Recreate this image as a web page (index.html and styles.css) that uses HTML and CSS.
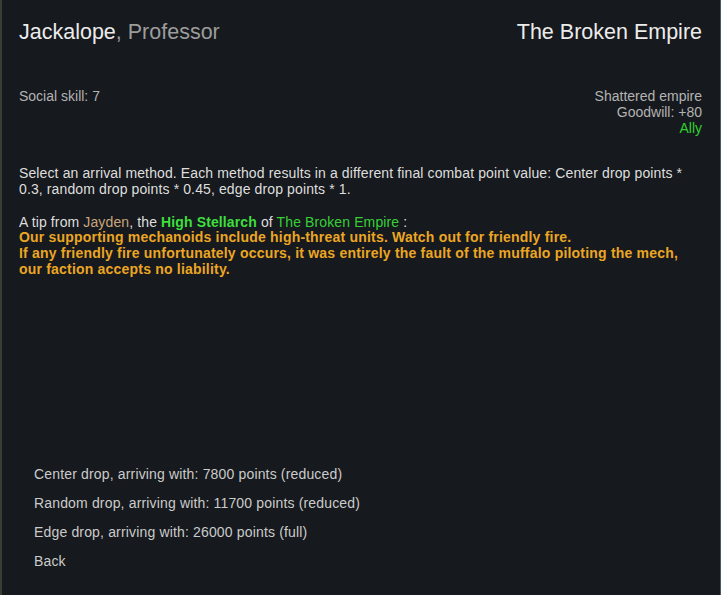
FILE: index.html
```html
<!DOCTYPE html>
<html>
<head>
<meta charset="utf-8">
<link rel="stylesheet" href="styles.css">
</head>
<body>
<div class="dialog">
  <div class="header">
    <div class="name">Jackalope<span class="title">, Professor</span></div>
    <div class="faction">The Broken Empire</div>
  </div>
  <div class="info">
    <div class="skill">Social skill: 7</div>
    <div class="standing">
      <div>Shattered empire</div>
      <div>Goodwill: +80</div>
      <div class="ally">Ally</div>
    </div>
  </div>
  <p class="desc">Select an arrival method. Each method results in a different final combat point value: Center drop points * 0.3, random drop points * 0.45, edge drop points * 1.</p>
  <div class="tip">
    <div class="tip-line">A tip from <span class="speaker">Jayden</span>, the <span class="rank">High Stellarch</span> of <span class="fac">The Broken Empire</span> :</div>
    <div class="warn">Our supporting mechanoids include high-threat units. Watch out for friendly fire.<br>If any friendly fire unfortunately occurs, it was entirely the fault of the muffalo piloting the mech, our faction accepts no liability.</div>
  </div>
  <div class="options">
    <div class="opt">Center drop, arriving with: 7800 points (reduced)</div>
    <div class="opt">Random drop, arriving with: 11700 points (reduced)</div>
    <div class="opt">Edge drop, arriving with: 26000 points (full)</div>
    <div class="opt">Back</div>
  </div>
</div>
</body>
</html>
```

FILE: styles.css
```css
html, body {
  margin: 0;
  padding: 0;
  height: 100%;
  background: #16191d;
}
body {
  font-family: "Liberation Sans", Arial, sans-serif;
  font-size: 14px;
  color: #dcdcdc;
}
.dialog {
  box-sizing: border-box;
  height: 595px;
  display: flex;
  flex-direction: column;
  border-left: 2px solid #3a3d33;
  border-right: 1px solid #4b5661;
  padding: 20px 18px 19px 17px;
}
.header {
  display: flex;
  justify-content: space-between;
  font-size: 21.5px;
  line-height: 24px;
  color: #ececec;
}
.title { color: #9c9c9c; }
.info {
  margin-top: 44px;
  display: flex;
  justify-content: space-between;
  line-height: 16px;
  color: #b3b3b3;
}
.standing { text-align: right; }
.ally { color: #2fd12f; }
.desc {
  margin: 29px 0 0 0;
  line-height: 16px;
  color: #dedede;
  letter-spacing: 0.12px;
}
.tip {
  margin-top: 16px;
  line-height: 16px;
  color: #dedede;
}
.tip-line {
  letter-spacing: 0.12px;
  margin-top: 1px;
  margin-bottom: -1px;
}
.speaker { color: #c9a57e; }
.rank { color: #3ddf3d; font-weight: bold; }
.fac { color: #36d036; }
.warn {
  color: #eba623;
  font-weight: bold;
  letter-spacing: 0.2px;
}
.options {
  margin-top: auto;
  padding-left: 15px;
  color: #cbcbcb;
}
.opt {
  line-height: 29px;
  letter-spacing: 0.16px;
}
```
